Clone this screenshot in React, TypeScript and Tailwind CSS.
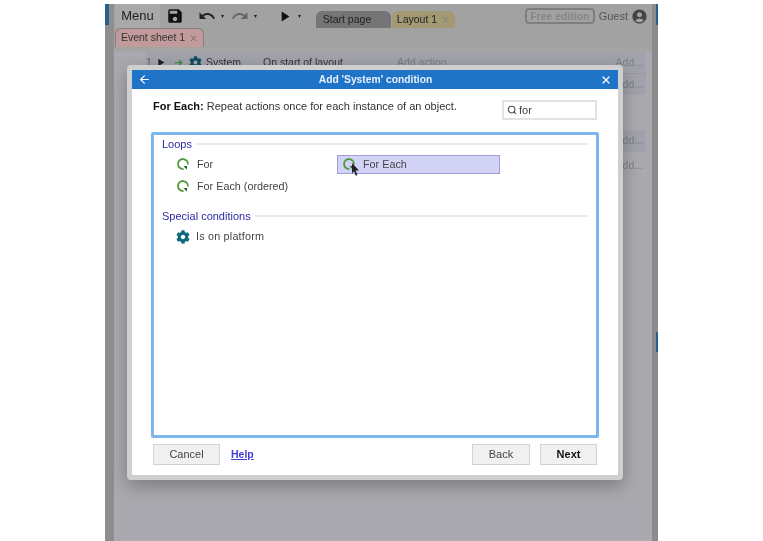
import React from 'react'
import { X, Search, ArrowLeft } from 'lucide-react'
import { FaCog } from 'react-icons/fa'
import { MdSave, MdUndo, MdRedo, MdAccountCircle, MdPlayArrow } from 'react-icons/md'

function LoopIcon() {
  return (
    <svg width="14" height="14" viewBox="0 0 14 14" fill="none" className="shrink-0">
      <path d="M12 7.5A5 5 0 1 0 7.5 12" stroke="#4f9a3a" strokeWidth="1.8" />
      <path d="M7.4 9.2l3.8-.3-.4 3.7z" fill="#24602a" />
    </svg>
  )
}

function Tab({ label, className }: { label: string; className: string }) {
  return (
    <div className={`flex items-center justify-center gap-1 h-[17px] rounded-t-[6px] text-[10.5px] text-[#222] ${className}`}>
      {label}
      <X size={9} strokeWidth={2} className="text-[#777]" />
    </div>
  )
}

function Caret({ className }: { className: string }) {
  return <span className={`text-[6px] text-[#222] ${className}`}>▾</span>
}

function EventRow({ withCondition, className }: { withCondition?: boolean; className: string }) {
  return (
    <div className={`ml-[32px] mr-[6px] flex items-center text-[10.5px] ${className}`}>
      {withCondition && (
        <>
          <span className="w-[8px] text-[#666]">1</span>
          <MdPlayArrow size={13} className="text-[#222]" />
          <span className="ml-[7px] w-[15px] text-[#3f8a3f]">➜</span>
          <FaCog size={13} className="text-[#0d5060]" />
          <span className="ml-[4px] w-[57px]">System</span>
          <span className="w-[134px]">On start of layout</span>
          <span className="text-[#7b7b84]">Add action</span>
        </>
      )}
      <span className="ml-auto pr-[3px] text-[#7f7f88]">Add...</span>
    </div>
  )
}

function Background() {
  return (
    <div className="h-[537px] w-[553px] ml-[105px] mt-[4px] flex bg-[#a9a9af] text-[#333]">
      <div className="w-[9px] shrink-0 bg-[#8e8e8e]">
        <div className="w-[4px] h-[21px] bg-[#25618f]" />
      </div>
      <div className="flex-1 min-w-0">
        <div className="h-[24px] flex items-center bg-[#a2a2a2]">
          <div className="h-[24px] w-[45px] ml-[1px] flex items-center justify-center text-[13px] text-[#222] bg-[#a9a9a9]">Menu</div>
          <MdSave size={18} className="ml-[6px] text-[#111]" />
          <MdUndo size={18} className="ml-[14px] text-[#222]" />
          <Caret className="ml-[5px]" />
          <MdRedo size={18} className="ml-[7px] text-[#666]" />
          <Caret className="ml-[5px]" />
          <MdPlayArrow size={17} className="ml-[19px] text-[#111]" />
          <Caret className="ml-[5px]" />
          <div className="ml-[15px] mt-[7px] flex gap-px">
            <Tab label="Start page" className="w-[75px] bg-[#757577]" />
            <Tab label="Layout 1" className="w-[63px] bg-[#a39a74]" />
          </div>
          <div className="ml-auto flex items-center pr-[4px]">
            <span className="border-2 border-[#7f7f82] rounded-[4px] px-[3px] text-[10.5px] leading-[12px] font-bold text-[#85858a]">Free edition</span>
            <span className="ml-[4px] text-[11px] text-[#555]">Guest</span>
            <MdAccountCircle size={17} className="ml-[3px] text-[#444]" />
          </div>
        </div>
        <div className="h-[19px] bg-[#a2a2a2] pl-[1px]">
          <div className="w-[89px] h-[19px] flex items-center justify-center gap-1 rounded-t-[6px] bg-[#c39a9b] border-t border-x border-[#85807f] text-[10.5px] text-[#333]">
            Event sheet 1
            <X size={9} strokeWidth={2} className="text-[#555]" />
          </div>
        </div>
        <div className="h-[5px] bg-gradient-to-b from-[#a2a2a2] to-[#a6a6a8]" />
        <EventRow withCondition className="h-[21px] bg-[#a2a2ac]" />
        <EventRow className="h-[22px] bg-[#a2a2ac] border-t border-[#98989f]" />
        <div className="h-[35px]" />
        <EventRow className="h-[22px] bg-[#a2a2ac]" />
        <EventRow className="h-[24px] mt-[2px]" />
      </div>
      <div className="w-[6px] shrink-0 bg-[#8b8b8b] flex flex-col items-end">
        <div className="w-[2px] h-[21px] bg-[#25618f]" />
        <div className="w-[2px] h-[20px] mt-[307px] bg-[#25618f]" />
      </div>
    </div>
  )
}

function Row({ label, active }: { label: string; active?: boolean }) {
  return (
    <div className={`h-[19px] flex items-center gap-[7px] pl-[4px] border ${active ? 'bg-[#d3d3f7] border-[#9f9fd8]' : 'border-transparent'}`}>
      <LoopIcon />
      {label}
    </div>
  )
}

function SectionHeader({ label }: { label: string }) {
  return (
    <div className="flex items-center gap-1 px-[8px] text-[11px] text-[#2e2aa5]">
      {label}
      <div className="flex-1 h-[2px] bg-[#eaeaf6]" />
    </div>
  )
}

function Dialog() {
  return (
    <div className="absolute left-[127px] top-[65px] w-[496px] h-[415px] flex flex-col bg-white border-[5px] border-[#cfcfcf] rounded-[4px] shadow-[0_6px_18px_rgba(0,0,0,0.28)]">
      <div className="h-[19px] shrink-0 flex items-center justify-between px-[6px] bg-[#1f74c8] text-white">
        <ArrowLeft size={13} strokeWidth={2} />
        <span className="text-[10.3px] font-bold text-[#e8f1fb]">Add 'System' condition</span>
        <X size={12} strokeWidth={2.4} />
      </div>
      <div className="flex items-start justify-between px-[21px] pt-[9px] h-[43px] text-[11px] text-[#333]">
        <p><b className="text-[#111]">For Each:</b> Repeat actions once for each instance of an object.</p>
        <div className="mt-[2px] w-[95px] h-[20px] flex items-center gap-[2px] px-[3px] border-2 border-[#e2e2e2] text-[#444]">
          <Search size={10} strokeWidth={2.5} />
          for
        </div>
      </div>
      <div className="mx-[19px] h-[306px] border-[3px] border-[#7db5ee] rounded-[2px] text-[10.8px] text-[#444] pt-[1px]">
        <SectionHeader label="Loops" />
        <div className="grid grid-cols-[166px_163px] gap-y-[3px] pl-[17px] mt-[2px]">
          <Row label="For" />
          <Row label="For Each" active />
          <Row label="For Each (ordered)" />
        </div>
        <div className="mt-[12px]">
          <SectionHeader label="Special conditions" />
        </div>
        <div className="h-[19px] mt-[3px] ml-[17px] flex items-center gap-[6px] pl-[5px] tracking-[0.2px]">
          <FaCog size={14} className="text-[#0f6a80]" />
          Is on platform
        </div>
      </div>
      <div className="flex items-center mt-[6px] px-[21px] text-[11px] text-[#444]">
        <button className="w-[67px] h-[21px] bg-[#f0f0f0] border border-[#d2d2d2]">Cancel</button>
        <a className="ml-[11px] text-[10.5px] text-[#3f3fd8] underline font-bold">Help</a>
        <button className="ml-auto w-[58px] h-[21px] bg-[#f0f0f0] border border-[#d2d2d2]">Back</button>
        <button className="ml-[10px] w-[57px] h-[21px] bg-[#f0f0f0] border border-[#d2d2d2] font-bold text-[#111]">Next</button>
      </div>
    </div>
  )
}

export default function App() {
  return (
    <div className="relative h-[541px] w-[763px] overflow-hidden bg-white font-['Liberation_Sans',sans-serif] blur-[0.4px]">
      <Background />
      <Dialog />
      {/* mouse pointer over the For Each row */}
      <svg width="9" height="13" viewBox="0 0 9 13" className="absolute left-[351px] top-[163px]">
        <path d="M1 0l7 7.5H4.6L6.5 12l-1.6.8L3 8.3 1 10.5z" fill="#222" />
      </svg>
    </div>
  )
}
